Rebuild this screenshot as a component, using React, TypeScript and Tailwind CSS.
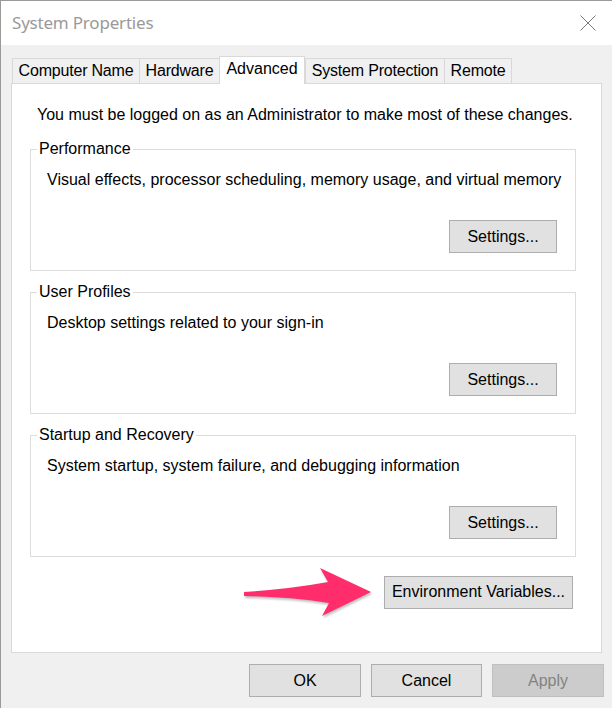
import { ReactNode } from "react";

const tabs = [
    { label: "Computer Name", w: "w-[127px]" },
    { label: "Hardware", w: "w-[80px]" },
    { label: "Advanced", w: "w-[86px]", active: true },
    { label: "System Protection", w: "w-[139px]" },
    { label: "Remote", w: "w-[68px]" },
];

const groups = [
    { title: "Performance", text: "Visual effects, processor scheduling, memory usage, and virtual memory" },
    { title: "User Profiles", text: "Desktop settings related to your sign-in" },
    { title: "Startup and Recovery", text: "System startup, system failure, and debugging information" },
];

const WinButton = ({ children, w, disabled }: { children: ReactNode; w: string; disabled?: boolean }) => (
    <button
        className={
            disabled
                ? `${w} h-[33px] border border-[#bfbfbf] bg-[#cccccc] text-[#838383]`
                : `${w} h-[33px] border border-[#adadad] bg-[#e1e1e1] text-black`
        }
    >
        {children}
    </button>
);

const Arrow = () => (
    <svg width="132" height="52" viewBox="242 561 132 52" className="drop-shadow-[1px_2px_1px_rgba(0,0,0,0.25)]">
        <path
            d="M244,587 Q290,584 328,577 L320,563 L371,587 L322,611 L329,598 Q290,592 244,591 Z"
            fill="#ff2d6c"
        />
    </svg>
);

export default function App() {
    return (
        <div className="w-[612px] h-[708px] bg-[#f0f0f0] border-l border-t border-[#9a9a9a] flex flex-col font-['Liberation_Sans',Arial,sans-serif] text-[16px] text-black overflow-hidden">
            <div className="h-[44px] bg-white flex items-center justify-between pl-[11px] pr-[16px] shrink-0">
                <span className="font-['Noto_Sans',sans-serif] text-[17px] text-[#999999] tracking-[-0.2px]">System Properties</span>
                <svg width="16" height="16" viewBox="0 0 16 16">
                    <path d="M0.5,0.5 L15.5,15.5 M15.5,0.5 L0.5,15.5" stroke="#7a7a7a" strokeWidth="1" fill="none" />
                </svg>
            </div>

            <div className="flex items-end pl-[11px] mt-[10px] h-[28px]">
                {tabs.map((t) =>
                    t.active ? (
                        <div
                            key={t.label}
                            className={`${t.w} h-[28px] -mb-px relative z-10 bg-white border border-b-0 border-[#d9d9d9] flex items-center justify-center pb-[3px]`}
                        >
                            {t.label}
                        </div>
                    ) : (
                        <div
                            key={t.label}
                            className={`${t.w} h-[25px] bg-[#f0f0f0] border border-b-0 border-r-0 last:border-r border-[#d9d9d9] flex items-center justify-center leading-none tracking-[-0.2px]`}
                        >
                            {t.label}
                        </div>
                    )
                )}
            </div>

            <div className="ml-[10px] w-[591px] h-[570px] bg-white border border-[#d9d9d9] flex flex-col">
                <p className="pl-[25px] pt-[22px] leading-[18px]">
                    You must be logged on as an Administrator to make most of these changes.
                </p>
                <div className="flex flex-col gap-[12px] mt-[16px] pl-[18px] pr-[25px]">
                    {groups.map((g) => (
                        <fieldset key={g.title} className="border border-[#dcdcdc]">
                            <legend className="ml-[6px] px-[2px] leading-[18px]">{g.title}</legend>
                            <p className="pl-[16px] pt-[13px] leading-[18px]">{g.text}</p>
                            <div className="flex justify-end mt-[31px] pr-[18px] pb-[17px]">
                                <WinButton w="w-[108px]">Settings...</WinButton>
                            </div>
                        </fieldset>
                    ))}
                </div>
                <div className="flex items-center justify-end gap-[10px] pr-[28px] mt-[9px]">
                    <Arrow />
                    <WinButton w="w-[189px]">Environment Variables...</WinButton>
                </div>
            </div>

            <div className="flex justify-end gap-[10px] pr-[8px] mt-[11px]">
                <WinButton w="w-[112px]">OK</WinButton>
                <WinButton w="w-[111px]">Cancel</WinButton>
                <WinButton w="w-[112px]" disabled>Apply</WinButton>
            </div>
        </div>
    );
}
